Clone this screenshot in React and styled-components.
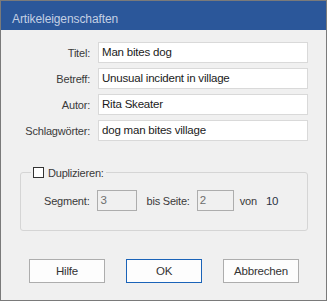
import styled, { createGlobalStyle } from 'styled-components';

const GlobalStyle = createGlobalStyle`
  html, body {
    margin: 0;
    padding: 0;
    background: #f0f0f0;
  }
  * {
    box-sizing: border-box;
  }
`;

const fields = [
  { label: 'Titel:', value: 'Man bites dog' },
  { label: 'Betreff:', value: 'Unusual incident in village' },
  { label: 'Autor:', value: 'Rita Skeater' },
  { label: 'Schlagwörter:', value: 'dog man bites village' },
];

function App() {
  return (
    <>
      <GlobalStyle />
      <Window>
        <TitleBar>Artikeleigenschaften</TitleBar>
        <Body>
          <Form>
            {fields.map((f) => (
              <FieldRow key={f.label}>
                <Label>{f.label}</Label>
                <TextBox>{f.value}</TextBox>
              </FieldRow>
            ))}
          </Form>

          <Group>
            <Legend>
              <CheckBox />
              <span>Duplizieren:</span>
            </Legend>
            <SegmentRow>
              <Label>Segment:</Label>
              <SmallBox $width={40}>3</SmallBox>
              <Label>bis Seite:</Label>
              <SmallBox $width={37}>2</SmallBox>
              <Label>von</Label>
              <Count>10</Count>
            </SegmentRow>
          </Group>

          <ButtonRow>
            <Button>Hilfe</Button>
            <Button $primary>OK</Button>
            <Button>Abbrechen</Button>
          </ButtonRow>
        </Body>
      </Window>
    </>
  );
}

const Window = styled.div`
  width: 327px;
  height: 301px;
  border: 1px solid #7a7a7a;
  background: #f0f0f0;
  display: flex;
  flex-direction: column;
  font-family: 'Liberation Sans', Arial, sans-serif;
  font-size: 11px;
  letter-spacing: -0.2px;
  color: #3a3a3a;
`;

const TitleBar = styled.div`
  height: 29px;
  flex-shrink: 0;
  background: #2b579a;
  color: #c4d0e4;
  font-size: 12px;
  letter-spacing: -0.1px;
  line-height: 14px;
  padding: 11px 0 0 11px;
`;

const Body = styled.div`
  flex: 1;
  display: flex;
  flex-direction: column;
`;

const Form = styled.div`
  display: flex;
  flex-direction: column;
  gap: 5px;
  padding: 12px 18px 0 0;
`;

const FieldRow = styled.div`
  display: grid;
  grid-template-columns: 1fr 210px;
  column-gap: 8px;
  align-items: center;
`;

const Label = styled.span`
  text-align: right;
  white-space: nowrap;
  color: #3a3a3a;
`;

const TextBox = styled.div`
  height: 21px;
  background: #ffffff;
  border: 1px solid #d9d9d9;
  color: #1a1a1a;
  padding: 0 3px;
  line-height: 19px;
  font-size: 11.5px;
`;

const Group = styled.fieldset`
  margin: 25px 18px 0 19px;
  padding: 0 10px 19px 10px;
  border: 1px solid #d5d5d5;
  border-radius: 3px;
  min-width: 0;
`;

const Legend = styled.legend`
  display: flex;
  align-items: center;
  gap: 4px;
  padding: 0 2px;
  height: 13px;
  color: #3a3a3a;
`;

const CheckBox = styled.span`
  width: 11px;
  height: 11px;
  border: 1px solid #333333;
  background: #ffffff;
`;

const SegmentRow = styled.div`
  display: flex;
  align-items: center;
  padding: 11px 0 0 13px;
  height: 21px;
  box-sizing: content-box;

  & > ${Label}:first-child {
    margin-right: 8px;
  }
  & > ${Label}:nth-child(3) {
    margin: 0 7px 0 9px;
  }
  & > ${Label}:nth-child(5) {
    margin: 0 9px 0 6px;
  }
`;

const SmallBox = styled.div`
  width: ${(p) => p.$width}px;
  height: 21px;
  border: 1px solid #adadad;
  background: #f0f0f0;
  color: #6d6d6d;
  padding: 0 2px;
  line-height: 19px;
  font-size: 11.5px;
`;

const Count = styled.span`
  color: #2c3444;
  font-size: 11.5px;
`;

const ButtonRow = styled.div`
  display: flex;
  gap: 21px;
  padding: 28px 0 0 28px;
`;

const Button = styled.button`
  width: 76px;
  height: 24px;
  padding: 0;
  background: #fdfdfd;
  border: 1px solid ${(p) => (p.$primary ? '#1a63b8' : '#adadad')};
  color: #333333;
  font-family: 'Liberation Sans', Arial, sans-serif;
  font-size: 11.5px;
  letter-spacing: -0.2px;
`;

export default App;
